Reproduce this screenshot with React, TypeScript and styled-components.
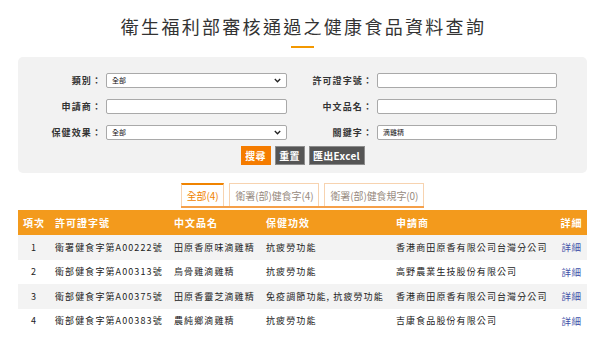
import React from "react";
import styled, { createGlobalStyle } from "styled-components";

const GlobalStyle = createGlobalStyle`
  html, body {
    margin: 0;
    padding: 0;
    background: #fff;
  }
  body {
    font-family: "Noto Sans CJK TC", "Noto Sans", sans-serif;
    color: #333;
  }
`;

type Row = {
  no: number;
  license: string;
  name: string;
  effect: string;
  applicant: string;
};

const rows: Row[] = [
  {
    no: 1,
    license: "衛署健食字第A00222號",
    name: "田原香原味滴雞精",
    effect: "抗疲勞功能",
    applicant: "香港商田原香有限公司台灣分公司",
  },
  {
    no: 2,
    license: "衛部健食字第A00313號",
    name: "烏骨雞滴雞精",
    effect: "抗疲勞功能",
    applicant: "高野農業生技股份有限公司",
  },
  {
    no: 3,
    license: "衛部健食字第A00375號",
    name: "田原香靈芝滴雞精",
    effect: "免疫調節功能, 抗疲勞功能",
    applicant: "香港商田原香有限公司台灣分公司",
  },
  {
    no: 4,
    license: "衛部健食字第A00383號",
    name: "農純鄉滴雞精",
    effect: "抗疲勞功能",
    applicant: "吉康食品股份有限公司",
  },
];

const tabs = [
  { label: "全部(4)", active: true },
  { label: "衛署(部)健食字(4)", active: false },
  { label: "衛署(部)健食規字(0)", active: false },
];

export default function App() {
  return (
    <>
      <GlobalStyle />
      <Page>
        <Title>衛生福利部審核通過之健康食品資料查詢</Title>
        <TitleBar />
        <Panel>
          <FormGrid>
            <Label>類別：</Label>
            <SelectBox>
              <span>全部</span>
              <Chevron />
            </SelectBox>
            <Label>許可證字號：</Label>
            <TextBox />
            <Label>申請商：</Label>
            <TextBox />
            <Label>中文品名：</Label>
            <TextBox />
            <Label>保健效果：</Label>
            <SelectBox>
              <span>全部</span>
              <Chevron />
            </SelectBox>
            <Label>關鍵字：</Label>
            <TextBox>滴雞精</TextBox>
          </FormGrid>
          <Buttons>
            <Button tone="orange" width={30}>搜尋</Button>
            <Button tone="gray" width={30}>重置</Button>
            <Button tone="gray" width={56}>匯出Excel</Button>
          </Buttons>
        </Panel>
        <TabBar>
          {tabs.map((t) => (
            <Tab key={t.label} active={t.active}>
              {t.label}
            </Tab>
          ))}
        </TabBar>
        <Table>
          <colgroup>
            <col style={{ width: 32 }} />
            <col style={{ width: 119 }} />
            <col style={{ width: 92 }} />
            <col style={{ width: 130 }} />
            <col style={{ width: 165 }} />
            <col style={{ width: 31 }} />
          </colgroup>
          <thead>
            <tr>
              <Th center>項次</Th>
              <Th>許可證字號</Th>
              <Th>中文品名</Th>
              <Th>保健功效</Th>
              <Th>申請商</Th>
              <Th center>詳細</Th>
            </tr>
          </thead>
          <tbody>
            {rows.map((r, i) => (
              <Tr key={r.no} striped={i % 2 === 0}>
                <Td center>{r.no}</Td>
                <Td>{r.license}</Td>
                <Td>{r.name}</Td>
                <Td>{r.effect}</Td>
                <Td>{r.applicant}</Td>
                <Td center>
                  <DetailLink href="#">詳細</DetailLink>
                </Td>
              </Tr>
            ))}
          </tbody>
        </Table>
      </Page>
    </>
  );
}

function Chevron() {
  return (
    <ChevronIcon width="7" height="5" viewBox="0 0 7 5">
      <path d="M0.8 1 L3.5 3.8 L6.2 1" fill="none" stroke="#222" strokeWidth="1.3" />
    </ChevronIcon>
  );
}

const Page = styled.div`
  width: 569px;
  margin-left: 18px;
  padding-top: 14px;
`;

const Title = styled.h1`
  margin: 0;
  text-align: center;
  font-size: 18px;
  line-height: 25px;
  font-weight: 400;
  letter-spacing: 2.3px;
  color: #333;
  padding-left: 2px;
`;

const TitleBar = styled.div`
  width: 23px;
  height: 2px;
  background: #f39800;
  margin: 7px auto 9px;
`;

const Panel = styled.div`
  background: #f2f2f2;
  border-radius: 5px;
  padding: 16px 0 8px;
`;

const FormGrid = styled.div`
  display: grid;
  grid-template-columns: 84px 181px 82px 180px;
  column-gap: 4px;
  row-gap: 11px;
  align-items: center;
`;

const Label = styled.div`
  text-align: right;
  font-size: 9px;
  font-weight: 700;
  letter-spacing: 1.1px;
  color: #333;
  line-height: 15px;
`;

const TextBox = styled.div`
  position: relative;
  height: 15px;
  box-sizing: border-box;
  background: #fff;
  border: 1px solid #a9a9a9;
  border-radius: 2px;
  font-size: 7px;
  line-height: 13px;
  padding-left: 5px;
  color: #111;
`;

const SelectBox = styled(TextBox)`
  display: flex;
  align-items: center;
  justify-content: space-between;
  padding-right: 5px;
`;

const ChevronIcon = styled.svg`
  display: block;
`;

const Buttons = styled.div`
  display: flex;
  justify-content: center;
  gap: 4px;
  margin-top: 6px;
`;

const Button = styled.button<{ tone: "orange" | "gray"; width: number }>`
  width: ${(p) => p.width}px;
  height: 19px;
  padding: 0;
  box-sizing: border-box;
  font-family: "Noto Sans CJK TC", "Noto Sans", sans-serif;
  font-size: 10px;
  font-weight: 700;
  color: #fff;
  letter-spacing: 0.3px;
  cursor: pointer;
  background: ${(p) => (p.tone === "orange" ? "#f57c00" : "#555555")};
  border: 1px solid ${(p) => (p.tone === "orange" ? "#f57c00" : "#8c8c8c")};
`;

const TabBar = styled.div`
  display: flex;
  justify-content: center;
  gap: 5px;
  width: fit-content;
  margin: 10px auto 0;
  border-bottom: 2px solid #f5a04a;
`;

const Tab = styled.div<{ active: boolean }>`
  height: 23px;
  box-sizing: border-box;
  padding: 0 5px;
  display: flex;
  align-items: center;
  font-size: 10px;
  letter-spacing: -0.1px;
  background: #fff;
  color: ${(p) => (p.active ? "#f08300" : "#978a80")};
  border: 1px solid #f7d3b0;
  border-bottom: none;
  border-top: ${(p) => (p.active ? "2px solid #f08300" : "1px solid #f7d3b0")};
`;

const Table = styled.table`
  width: 100%;
  margin-top: 2px;
  border-collapse: collapse;
  table-layout: fixed;
`;

const Th = styled.th<{ center?: boolean }>`
  background: #f39a1c;
  color: #fff;
  height: 25px;
  padding: 0 0 0 ${(p) => (p.center ? 0 : 5)}px;
  text-align: ${(p) => (p.center ? "center" : "left")};
  font-size: 10px;
  font-weight: 700;
  letter-spacing: 1px;
`;

const Tr = styled.tr<{ striped: boolean }>`
  background: ${(p) => (p.striped ? "#f3f3f3" : "#fff")};
`;

const Td = styled.td<{ center?: boolean }>`
  height: 24.5px;
  padding: 0 0 0 ${(p) => (p.center ? 0 : 5)}px;
  text-align: ${(p) => (p.center ? "center" : "left")};
  font-size: 9px;
  letter-spacing: 1.1px;
  color: #222;
  white-space: nowrap;
  overflow: hidden;
`;

const DetailLink = styled.a`
  color: #3d4fa8;
  text-decoration: none;
  font-size: 9.5px;
  letter-spacing: 0.5px;
`;
